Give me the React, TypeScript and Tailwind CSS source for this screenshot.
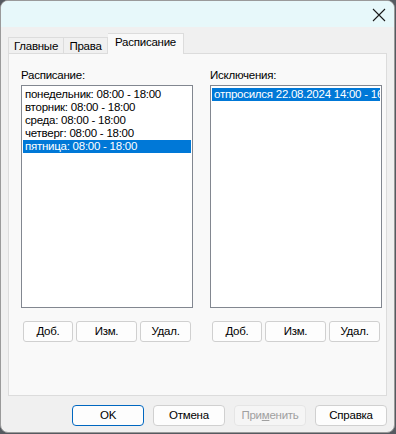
import React from 'react'

const FONT = { fontFamily: '"Segoe UI", "Liberation Sans", sans-serif', letterSpacing: '-0.25px' }

const SCHEDULE = [
  'понедельник: 08:00 - 18:00',
  'вторник: 08:00 - 18:00',
  'среда: 08:00 - 18:00',
  'четверг: 08:00 - 18:00',
  'пятница: 08:00 - 18:00',
]

function SmallBtn({ label, w }: { label: string; w: string }) {
  return (
    <div className={`${w} h-[21px] flex items-center justify-center rounded-[3px] border border-[#d0d0d0] bg-[#fdfdfd] text-[11.5px] text-black`}>
      {label}
    </div>
  )
}

function ListPanel({ title, items, selected }: { title: string; items: string[]; selected: number }) {
  return (
    <div className="flex flex-col w-[172px]">
      <div className="text-[11.5px] leading-[14px] text-black h-[18px] pt-[1px]">{title}</div>
      <div className="h-[223px] border border-[#828790] bg-white px-[1px] pt-[2px] overflow-hidden">
        {items.map((t, i) => (
          <div
            key={t}
            className={`h-[13px] leading-[13px] text-[11.5px] whitespace-nowrap pl-[2px] ${i === selected ? 'bg-[#0078d7] text-white' : 'text-black'}`}
          >
            {t}
          </div>
        ))}
      </div>
      <div className="flex gap-[3px] mt-[13px] px-[2px]">
        <SmallBtn label="Доб." w="w-[50px]" />
        <SmallBtn label="Изм." w="w-[61px]" />
        <SmallBtn label="Удал." w="w-[51px]" />
      </div>
    </div>
  )
}

function DlgBtn({ label, primary, disabled }: { label: React.ReactNode; primary?: boolean; disabled?: boolean }) {
  return (
    <div
      className={`w-[72px] h-[21px] flex items-center justify-center rounded-[4px] text-[11.5px] ${
        primary
          ? 'border border-[#0067c0] bg-[#fdfdfd] text-black'
          : disabled
            ? 'border border-[#e5e5e5] bg-[#f5f5f5] text-[#a0a0a0]'
            : 'border border-[#d0d0d0] bg-[#fdfdfd] text-black'
      }`}
    >
      {label}
    </div>
  )
}

export default function App() {
  return (
    <div className="w-[396px] h-[434px] bg-[#555a60]" style={FONT}>
      <div className="w-[395px] h-[433px] rounded-[8px] border border-[#9a9a9a] bg-[#f0f0f0] overflow-hidden flex flex-col">
        <div className="h-[26px] bg-[#e7f8fa] flex justify-end items-center pr-[8px]">
          <svg width="14" height="14" viewBox="0 0 14 14" className="mt-[2px]">
            <path d="M1 1 L13 13 M13 1 L1 13" stroke="#1a1a1a" strokeWidth="1.1" />
          </svg>
        </div>
        <div className="flex-1 flex flex-col px-[7px] pt-[6px]">
          <div className="flex items-end h-[20px]">
            <div className="w-[56px] h-[16px] text-center border border-b-0 border-[#dcdcdc] bg-[#f0f0f0] text-[11.5px] leading-[17px] text-black">Главные</div>
            <div className="w-[44px] h-[16px] text-center border border-b-0 border-l-0 border-[#dcdcdc] bg-[#f0f0f0] text-[11.5px] leading-[17px] text-black">Права</div>
            <div className="w-[76px] h-[21px] text-center border border-b-0 border-l-0 border-[#dcdcdc] bg-[#f9f9f9] text-[11.5px] leading-[17px] text-black relative top-[1px] z-10">Расписание</div>
          </div>
          <div className="h-[343px] border border-[#dcdcdc] bg-[#f9f9f9] flex gap-[17px] pl-[12px] pt-[13px]">
            <ListPanel title="Расписание:" items={SCHEDULE} selected={4} />
            <ListPanel title="Исключения:" items={['отпросился 22.08.2024 14:00 - 16:00']} selected={0} />
          </div>
          <div className="flex justify-end gap-[9px] mt-[9px]">
            <DlgBtn label="OK" primary />
            <DlgBtn label="Отмена" />
            <DlgBtn label={<span>При<span className="underline">м</span>енить</span>} disabled />
            <DlgBtn label="Справка" />
          </div>
        </div>
      </div>
    </div>
  )
}
